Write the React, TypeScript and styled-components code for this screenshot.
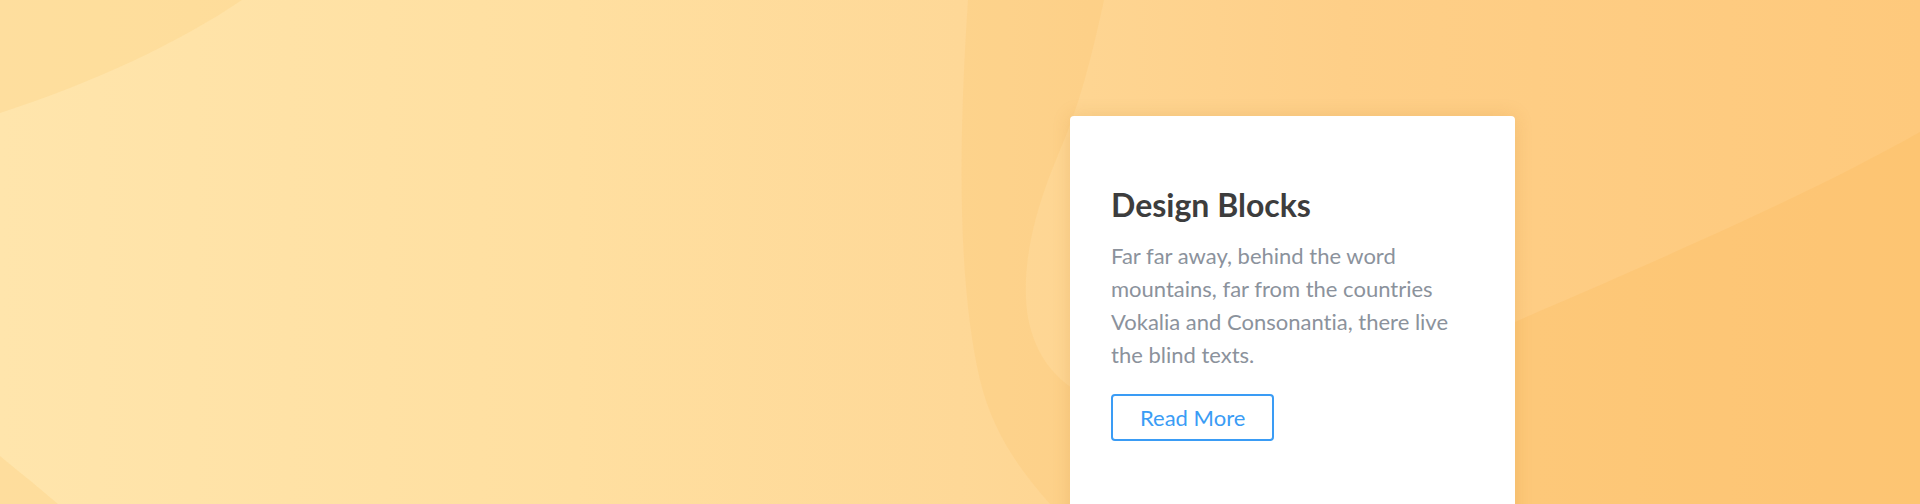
import React from "react";
import styled, { createGlobalStyle } from "styled-components";

const GlobalStyle = createGlobalStyle`
  html, body {
    margin: 0;
    padding: 0;
    overflow: hidden;
  }
  body {
    font-family: Lato, "Open Sans", Arial, sans-serif;
    font-variant-ligatures: no-common-ligatures;
    -webkit-font-smoothing: antialiased;
  }
  * { box-sizing: border-box; }
`;

const Section = styled.section`
  position: relative;
  height: 504px;
  overflow: hidden;
  background: linear-gradient(90deg, #ffe5ac 0%, #ffdfa0 30%, #fed897 50%, #fecf88 70%, #fec97c 100%);
  padding-top: 116px;
`;

const Backdrop = styled.svg`
  position: absolute;
  inset: 0;
  width: 100%;
  height: 100%;
  pointer-events: none;
`;

const Container = styled.div`
  position: relative;
  width: 1110px;
  margin: 0 auto;
  display: flex;
  justify-content: flex-end;
`;

const Card = styled.article`
  width: 445px;
  background: #ffffff;
  border-radius: 4px;
  padding: 70px 41px 120px;
  box-shadow: 0 0 18px rgba(190, 120, 30, 0.18);
`;

const Title = styled.h2`
  margin: 0 0 15px;
  font-family: Lato, "Open Sans", Arial, sans-serif;
  font-weight: 700;
  font-size: 32px;
  line-height: 1.2;
  color: #3d3d3d;
`;

const Text = styled.p`
  margin: 0 0 23px;
  font-size: 22px;
  line-height: 33px;
  color: #8b929c;
`;

const OutlineButton = styled.a`
  display: inline-block;
  padding: 6px 27px;
  border: 2px solid #3a9cf5;
  border-radius: 4px;
  font-size: 22px;
  line-height: 31px;
  color: #3a9cf5;
  text-decoration: none;
  cursor: pointer;
`;

export default function App() {
  return (
    <>
      <GlobalStyle />
      <Section>
        <Backdrop viewBox="0 0 1920 504" preserveAspectRatio="none" aria-hidden="true">
          <path d="M0,0 H242 C180,42 95,82 0,113 Z" fill="rgba(250,200,110,0.22)" />
          <path d="M0,456 C22,474 42,490 58,504 H0 Z" fill="rgba(250,200,110,0.25)" />
          <path
            d="M968,0 L1104,0 C1092,55 1080,105 1058,155 C1034,212 1020,268 1028,318 C1036,358 1056,378 1078,392 L1078,504 L1050,504 C1018,468 992,430 980,380 C958,285 958,150 968,0 Z"
            fill="rgba(250,185,90,0.16)"
          />
          <path
            d="M1920,132 C1790,205 1640,268 1380,380 C1300,415 1240,450 1180,504 L1920,504 Z"
            fill="rgba(252,180,80,0.22)"
          />
        </Backdrop>
        <Container>
          <Card>
            <Title>Design Blocks</Title>
            <Text>
              Far far away, behind the word mountains, far from the countries
              Vokalia and Consonantia, there live the blind texts.
            </Text>
            <OutlineButton href="#">Read More</OutlineButton>
          </Card>
        </Container>
      </Section>
    </>
  );
}
